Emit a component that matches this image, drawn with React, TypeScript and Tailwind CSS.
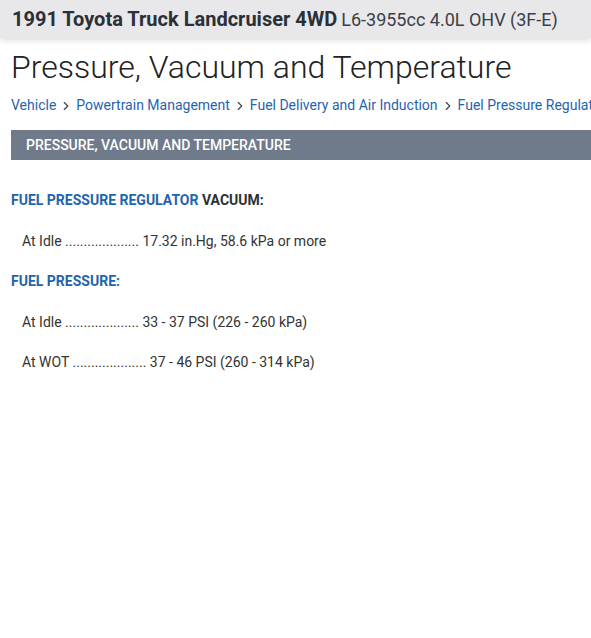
import { ChevronRight } from "lucide-react";

const crumbs = ["Vehicle", "Powertrain Management", "Fuel Delivery and Air Induction", "Fuel Pressure Regulator"];

function Spec({ label, dots, value }: { label: string; dots: string; value: string }) {
  return (
    <p className="pl-[11px] text-[14px] text-[#333] leading-5">
      {label} {dots} {value}
    </p>
  );
}

export default function App() {
  return (
    <div className="min-h-[638px] w-[591px] overflow-hidden bg-white font-['Roboto',sans-serif]">
      <div className="h-[38px] bg-[#e8e8ea] px-3 flex items-center whitespace-nowrap shadow-[0_2px_6px_rgba(0,0,0,0.15)] relative">
        <span className="text-[20px] font-bold text-[#2b3038]">1991 Toyota Truck Landcruiser 4WD</span>
        <span className="ml-1 text-[18px] text-[#3c4048]">L6-3955cc 4.0L OHV (3F-E)</span>
      </div>

      <div className="px-[11px]">
        <h1 className="mt-[9px] text-[32px] font-light text-[#222] leading-10 whitespace-nowrap">
          Pressure, Vacuum and Temperature
        </h1>

        <nav className="mt-[8px] flex items-center whitespace-nowrap text-[14px] text-[#1f64ad]">
          {crumbs.map((c, i) => (
            <span key={c} className="flex items-center">
              {i > 0 && <ChevronRight className="w-[14px] h-[14px] mx-[3px] text-[#444]" strokeWidth={2} />}
              <span>{c}</span>
            </span>
          ))}
        </nav>

        <div className="mt-[14px] h-[30px] bg-[#6f7b8a] flex items-center pl-[15px] -mr-[11px]">
          <span className="text-[14px] font-medium text-white uppercase">
            Pressure, Vacuum and Temperature
          </span>
        </div>

        <div className="mt-[30px] text-[14px] font-bold leading-5">
          <span className="text-[#1f64ad]">FUEL PRESSURE REGULATOR</span>{" "}
          <span className="text-[#2b3038]">VACUUM:</span>
        </div>

        <div className="mt-[21px]">
          <Spec label="At Idle" dots="...................." value="17.32 in.Hg, 58.6 kPa or more" />
        </div>

        <div className="mt-[20px] text-[14px] font-bold leading-5 text-[#1f64ad]">FUEL PRESSURE:</div>

        <div className="mt-[21px] flex flex-col gap-[20px]">
          <Spec label="At Idle" dots="...................." value="33 - 37 PSI (226 - 260 kPa)" />
          <Spec label="At WOT" dots="...................." value="37 - 46 PSI (260 - 314 kPa)" />
        </div>
      </div>
    </div>
  );
}
